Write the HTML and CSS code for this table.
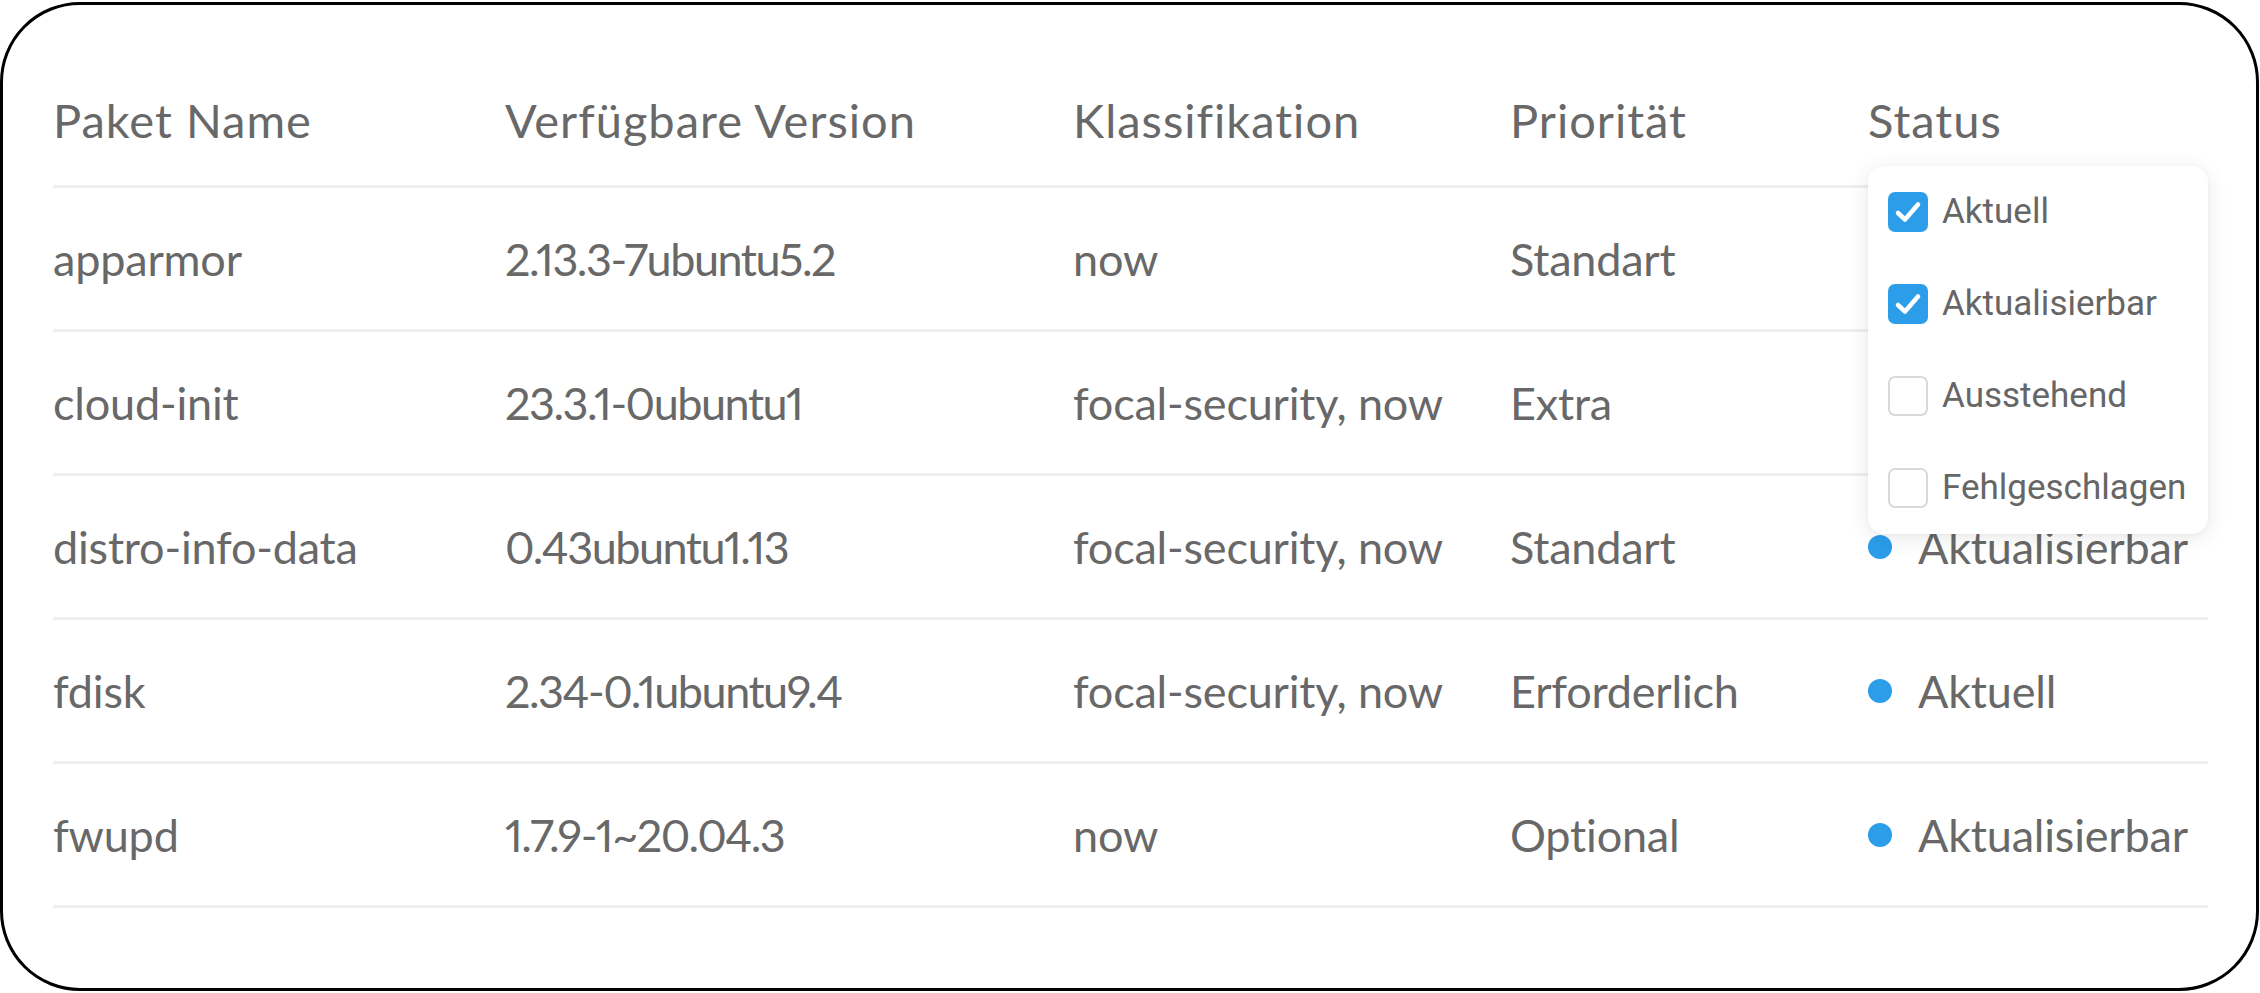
FILE: index.html
```html
<!DOCTYPE html>
<html lang="de">
<head>
<meta charset="utf-8">
<title>Pakete</title>
<link rel="stylesheet" href="styles.css">
</head>
<body>
<div class="card">
  <div class="table">
    <div class="row head">
      <div class="cell">Paket Name</div>
      <div class="cell">Verfügbare Version</div>
      <div class="cell">Klassifikation</div>
      <div class="cell">Priorität</div>
      <div class="cell status-head">Status
        <div class="menu">
          <label class="item"><span class="box checked"><svg viewBox="0 0 40 40"><path d="M10 21 L17 27.5 L30 12.5"/></svg></span>Aktuell</label>
          <label class="item"><span class="box checked"><svg viewBox="0 0 40 40"><path d="M10 21 L17 27.5 L30 12.5"/></svg></span>Aktualisierbar</label>
          <label class="item"><span class="box"></span>Ausstehend</label>
          <label class="item"><span class="box"></span>Fehlgeschlagen</label>
        </div>
      </div>
    </div>
    <div class="row">
      <div class="cell">apparmor</div>
      <div class="cell version">2.13.3-7ubuntu5.2</div>
      <div class="cell">now</div>
      <div class="cell">Standart</div>
      <div class="cell status"></div>
    </div>
    <div class="row">
      <div class="cell">cloud-init</div>
      <div class="cell version">23.3.1-0ubuntu1</div>
      <div class="cell">focal-security, now</div>
      <div class="cell">Extra</div>
      <div class="cell status"></div>
    </div>
    <div class="row">
      <div class="cell">distro-info-data</div>
      <div class="cell version">0.43ubuntu1.13</div>
      <div class="cell">focal-security, now</div>
      <div class="cell">Standart</div>
      <div class="cell status"><span class="dot"></span>Aktualisierbar</div>
    </div>
    <div class="row">
      <div class="cell">fdisk</div>
      <div class="cell version">2.34-0.1ubuntu9.4</div>
      <div class="cell">focal-security, now</div>
      <div class="cell">Erforderlich</div>
      <div class="cell status"><span class="dot"></span>Aktuell</div>
    </div>
    <div class="row">
      <div class="cell">fwupd</div>
      <div class="cell version">1.7.9-1~20.04.3</div>
      <div class="cell">now</div>
      <div class="cell">Optional</div>
      <div class="cell status"><span class="dot"></span>Aktualisierbar</div>
    </div>
  </div>
</div>
</body>
</html>
```

FILE: styles.css
```css
* { box-sizing: border-box; }

html, body {
  margin: 0;
  padding: 0;
  background: #ffffff;
}

body {
  width: 2260px;
  height: 993px;
  overflow: hidden;
}

.card {
  width: 2259px;
  height: 989px;
  margin: 2px 1px 0 0;
  border: 3px solid #000000;
  border-radius: 80px;
  background: #ffffff;
  padding: 50px 48px 0 50px;
}

.table {
  width: 2155px;
  font-family: "Lato", "Liberation Sans", sans-serif;
  font-size: 45px;
  letter-spacing: -0.2px;
  color: #686868;
  font-variant-numeric: proportional-nums;
}

.row {
  display: grid;
  grid-template-columns: 452px 568px 437px 358px 340px;
  height: 144px;
  border-bottom: 3px solid #efefef;
}

.row.head {
  height: 133px;
  font-size: 47px;
  letter-spacing: 1px;
}

.cell {
  display: flex;
  align-items: center;
  white-space: nowrap;
  line-height: 1.2;
}

.version {
  letter-spacing: -1.5px;
}

.status {
  gap: 26px;
}

.dot {
  width: 24px;
  height: 24px;
  border-radius: 50%;
  background: #2b9de9;
  flex: none;
}

.status-head {
  position: relative;
}

.menu {
  position: absolute;
  top: 111px;
  left: 0;
  width: 340px;
  background: #ffffff;
  border-radius: 16px;
  box-shadow: 0 4px 22px rgba(0, 0, 0, 0.09), 0 1px 4px rgba(0, 0, 0, 0.04);
  z-index: 5;
  font-family: "Roboto", "Liberation Sans", sans-serif;
  font-size: 35px;
  letter-spacing: 0;
  color: #666666;
}

.item {
  display: flex;
  align-items: center;
  height: 92px;
  padding-left: 20px;
  gap: 14px;
}

.box {
  width: 40px;
  height: 40px;
  border-radius: 7px;
  border: 2px solid #d9d9d9;
  background: #ffffff;
  flex: none;
  display: flex;
}

.box.checked {
  border: none;
  background: #2b9de9;
}

.box svg {
  width: 40px;
  height: 40px;
}

.box path {
  fill: none;
  stroke: #ffffff;
  stroke-width: 4.5;
  stroke-linecap: round;
  stroke-linejoin: round;
}
```
